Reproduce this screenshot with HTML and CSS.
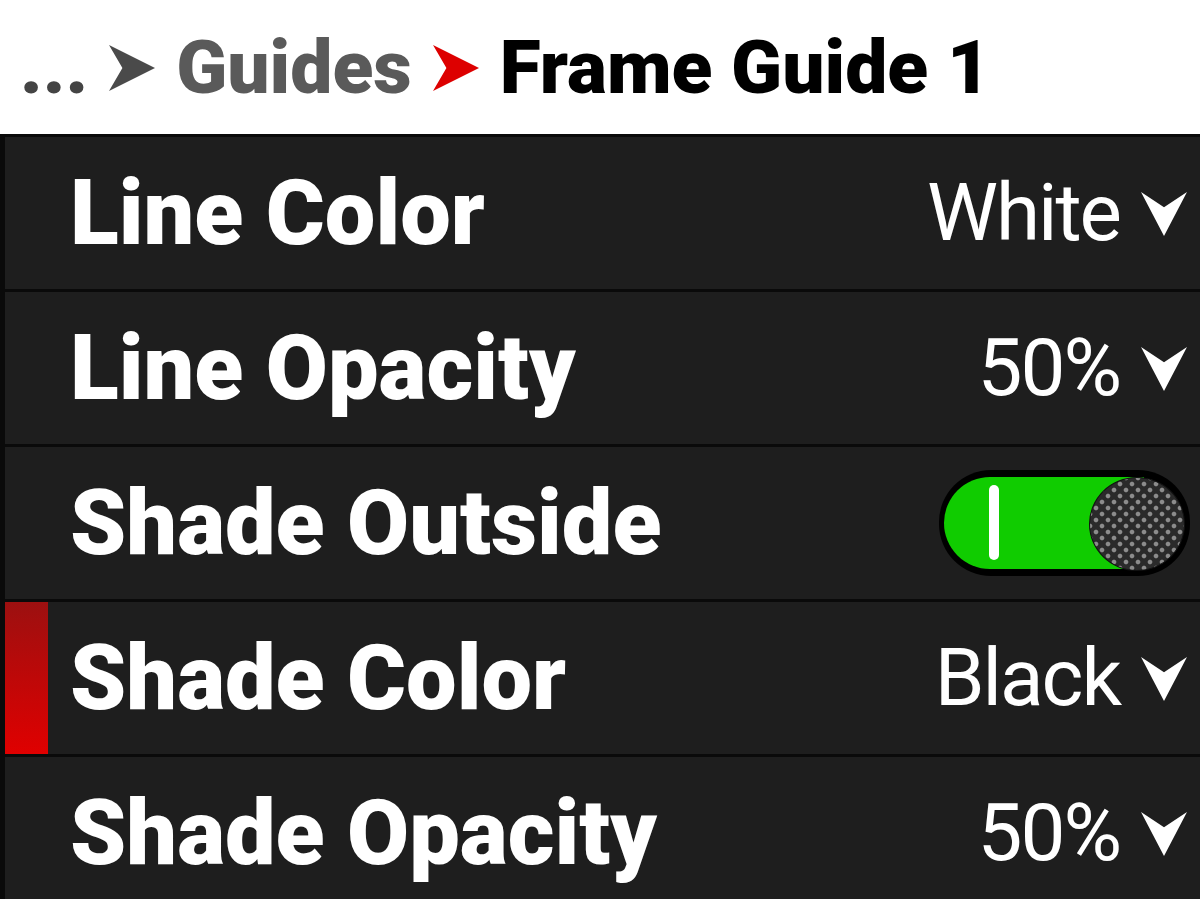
FILE: index.html
```html
<!DOCTYPE html>
<html lang="en">
<head>
    <meta charset="UTF-8">
    <title>Frame Guide 1</title>
    <link rel="stylesheet" href="styles.css">
</head>
<body>

<div class="crumbs">
    <span class="crumb-more">...</span>
    <svg class="crumb-arrow" viewBox="0 0 48 48"><polygon points="0,0 48,24 0,48 14,24" fill="#4a4a4a"/></svg>
    <span class="crumb-parent">Guides</span>
    <svg class="crumb-arrow" viewBox="0 0 48 48"><polygon points="0,0 48,24 0,48 14,24" fill="#dd0000"/></svg>
    <span class="crumb-current">Frame Guide 1</span>
</div>

<div class="menu">
    <div class="row">
        <span class="label">Line Color</span>
        <span class="value">White
            <svg class="caret" viewBox="0 0 48 48"><polygon points="0,0 24,16 48,0 24,46" fill="#fff"/></svg>
        </span>
    </div>
    <div class="row">
        <span class="label">Line Opacity</span>
        <span class="value">50%
            <svg class="caret" viewBox="0 0 48 48"><polygon points="0,0 24,16 48,0 24,46" fill="#fff"/></svg>
        </span>
    </div>
    <div class="row">
        <span class="label">Shade Outside</span>
        <div class="toggle">
            <div class="toggle-fill">
                <span class="toggle-mark"></span>
            </div>
            <span class="toggle-knob"></span>
        </div>
    </div>
    <div class="row row-selected">
        <span class="label">Shade Color</span>
        <span class="value">Black
            <svg class="caret" viewBox="0 0 48 48"><polygon points="0,0 24,16 48,0 24,46" fill="#fff"/></svg>
        </span>
    </div>
    <div class="row">
        <span class="label">Shade Opacity</span>
        <span class="value">50%
            <svg class="caret" viewBox="0 0 48 48"><polygon points="0,0 24,16 48,0 24,46" fill="#fff"/></svg>
        </span>
    </div>
</div>

</body>
</html>
```

FILE: styles.css
```css
body {
    margin: 0;
    font-family: 'Roboto', 'Liberation Sans', sans-serif;
    background: #1e1e1e;
    overflow: hidden;
}
.crumbs {
    height: 134px;
    background: #fff;
    display: flex;
    align-items: center;
    padding-left: 20px;
    gap: 21px;
    font-weight: 900;
    font-size: 75px;
    white-space: nowrap;
}
.crumb-more {
    color: #444;
}
.crumb-parent {
    color: #5a5a5a;
}
.crumb-current {
    color: #000;
}
.crumb-arrow {
    width: 46px;
    height: 48px;
    margin-top: 2px;
}
.menu {
    border-left: 5px solid #0a0a0a;
}
.row {
    position: relative;
    height: 152px;
    border-top: 3px solid #0a0a0a;
    display: flex;
    align-items: center;
    justify-content: space-between;
    padding: 0 12px 0 65px;
    color: #fff;
}
.row-selected::before {
    content: "";
    position: absolute;
    left: 0;
    top: 0;
    bottom: 0;
    width: 43px;
    background: linear-gradient(#9c1010, #e00000);
}
.label {
    font-weight: 900;
    font-size: 90px;
}
.value {
    display: flex;
    align-items: center;
    gap: 20px;
    font-size: 80px;
    font-weight: 400;
    letter-spacing: -2px;
}
.caret {
    width: 48px;
    height: 46px;
    margin-top: 4px;
}
.toggle {
    position: relative;
    width: 240px;
    height: 96px;
    background: #000;
    border-radius: 52px;
    padding: 5px 6px 5px 5px;
    margin-right: -2px;
}
.toggle-fill {
    width: 200px;
    height: 92px;
    margin-top: 2px;
    background: #10cc00;
    border-radius: 46px 0 0 46px;
}
.toggle-mark {
    position: absolute;
    left: 50px;
    top: 15px;
    width: 10px;
    height: 75px;
    background: #fff;
    border-radius: 5px;
}
.toggle-knob {
    position: absolute;
    right: 5px;
    top: 7px;
    width: 94px;
    height: 92px;
    border: 1px solid #111;
    border-radius: 50%;
    background-color: #2a2a2a;
    background-image:
        radial-gradient(circle, #8c8c8c 1.8px, transparent 2.8px),
        radial-gradient(circle, #8c8c8c 1.8px, transparent 2.8px);
    background-size: 12px 12px;
    background-position: 0 0, 6px 6px;
}
```
